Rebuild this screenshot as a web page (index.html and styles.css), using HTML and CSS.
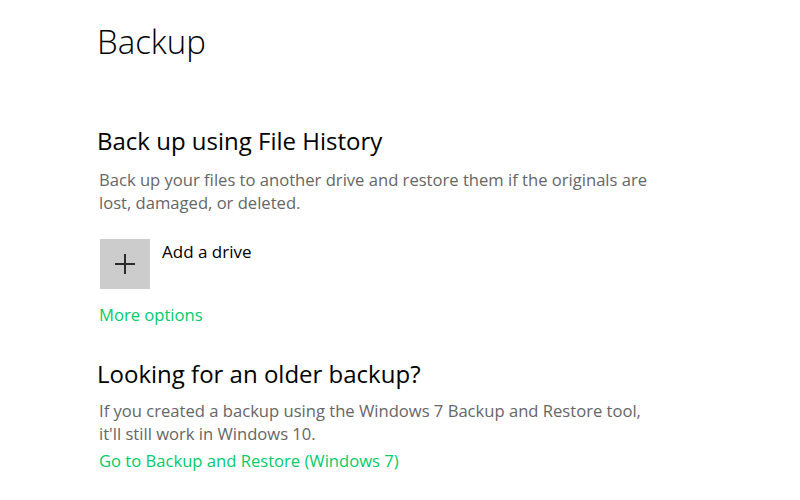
FILE: index.html
```html
<!DOCTYPE html>
<html lang="en">
<head>
<meta charset="utf-8">
<title>Backup</title>
<link rel="stylesheet" href="styles.css">
</head>
<body>
<main class="page">
  <h1 class="title">Backup</h1>

  <section class="section first">
    <h2 class="heading">Back up using File History</h2>
    <p class="desc">Back up your files to another drive and restore them if the originals are<br>lost, damaged, or deleted.</p>
    <div class="drive-row">
      <div class="add-tile">
        <svg width="20" height="20" viewBox="0 0 20 20" aria-hidden="true">
          <path d="M10 0V20M0 10H20" stroke="#2b2b2b" stroke-width="2" fill="none"/>
        </svg>
      </div>
      <span class="drive-label">Add a drive</span>
    </div>
    <a class="link more" href="#">More options</a>
  </section>

  <section class="section second">
    <h2 class="heading">Looking for an older backup?</h2>
    <p class="desc">If you created a backup using the Windows 7 Backup and Restore tool,<br>it'll still work in Windows 10.</p>
    <a class="link restore" href="#">Go to Backup and Restore (Windows 7)</a>
  </section>
</main>
</body>
</html>
```

FILE: styles.css
```css
html, body {
  margin: 0;
  padding: 0;
  background: #ffffff;
}

body {
  font-family: "Open Sans", "Noto Sans", sans-serif;
  color: #000000;
}

.page {
  width: 800px;
  height: 500px;
  box-sizing: border-box;
  padding: 20px 0 0 97px;
  overflow: hidden;
}

.title {
  margin: 0;
  font-size: 33px;
  font-weight: 300;
  line-height: 44px;
}

.section.first {
  margin-top: 62px;
}

.section.second {
  margin-top: 33px;
}

.heading {
  margin: 0;
  font-size: 24px;
  font-weight: 400;
  line-height: 30px;
}

.desc {
  margin: 12px 0 0 2px;
  font-size: 16.6px;
  line-height: 23px;
  color: #666666;
}

.second .desc {
  margin-top: 10px;
}

.drive-row {
  display: flex;
  align-items: flex-start;
  margin: 25px 0 0 3px;
}

.add-tile {
  width: 50px;
  height: 50px;
  background: #cccccc;
  display: flex;
  align-items: center;
  justify-content: center;
}

.drive-label {
  margin-left: 12px;
  font-size: 17px;
  line-height: 23px;
  margin-top: 1px;
}

.link {
  display: block;
  font-size: 16.6px;
  line-height: 23px;
  color: #00cc6a;
  text-decoration: none;
  margin-left: 2px;
}

.link.more {
  margin-top: 14px;
}

.link.restore {
  margin-top: 4px;
}
```
